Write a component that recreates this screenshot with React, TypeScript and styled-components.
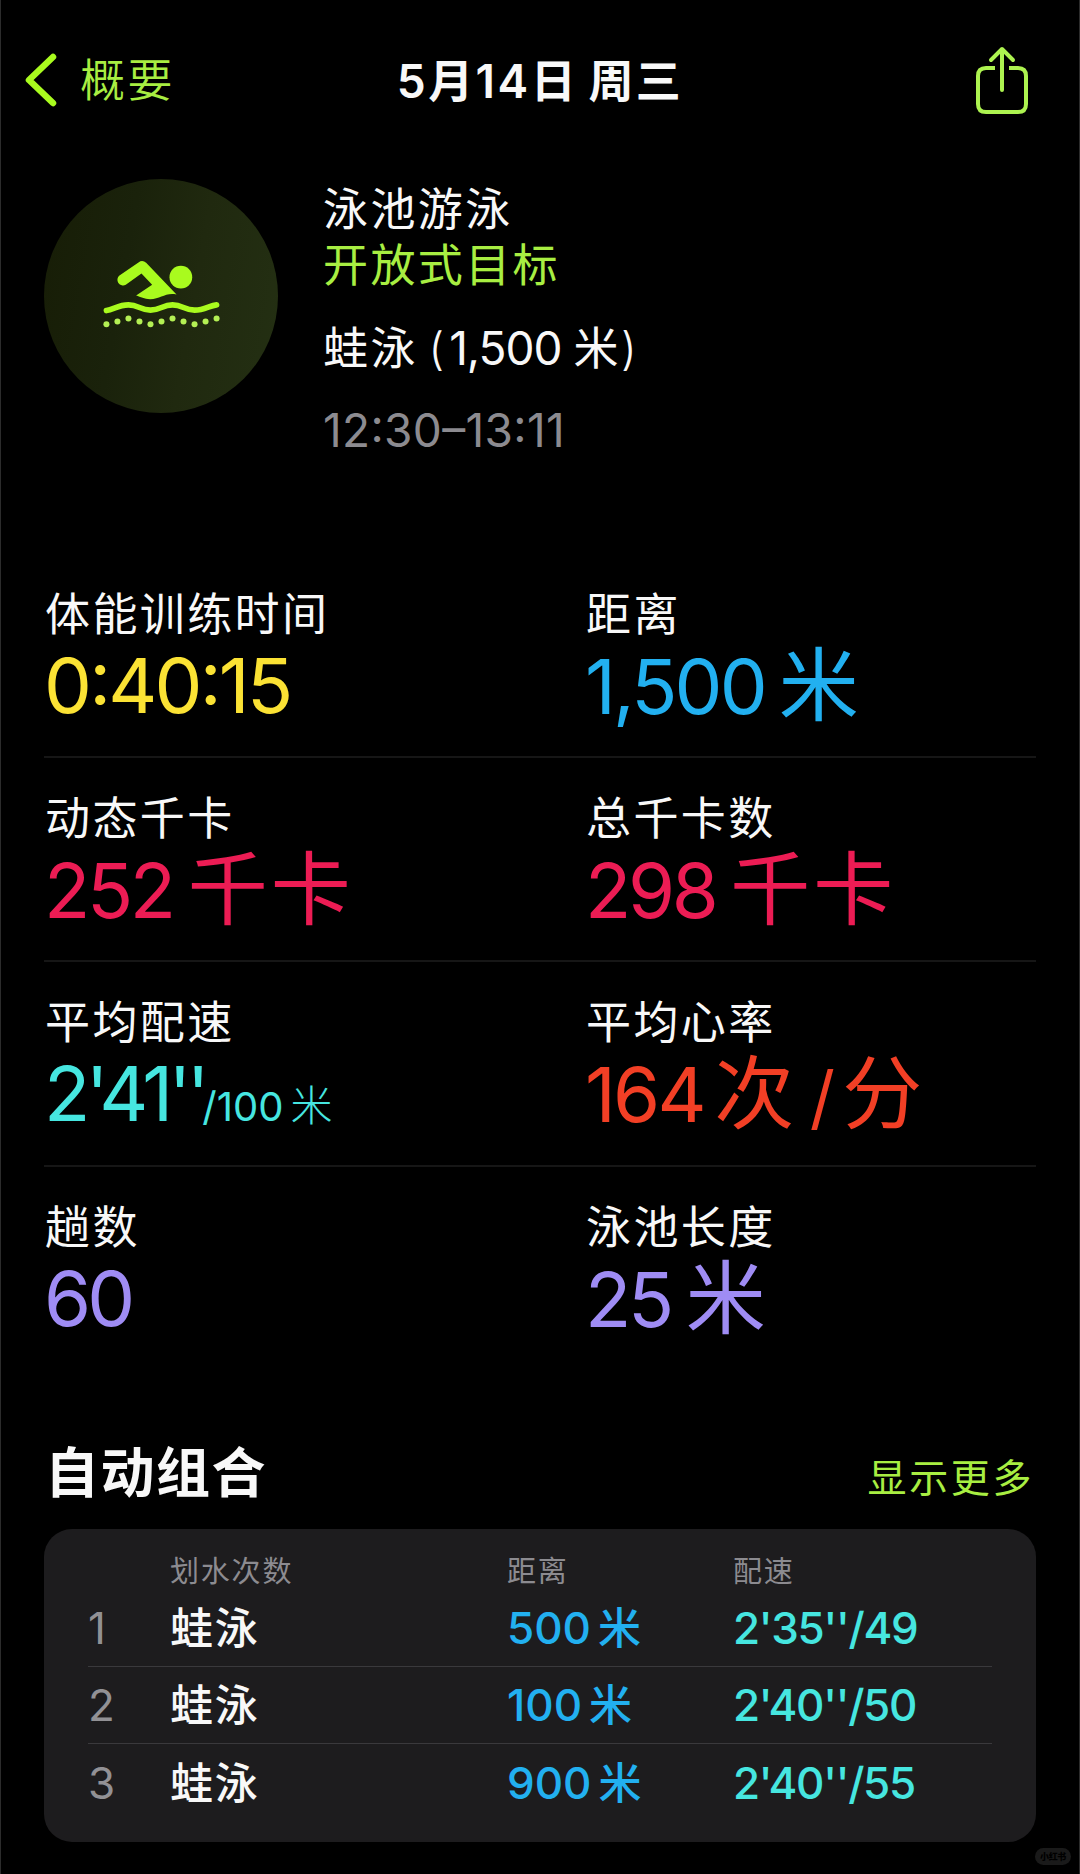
import React from "react";
import styled, { createGlobalStyle } from "styled-components";

const c = {
  lime: "#a9fb1e",
  limeText: "#a8ee42",
  white: "#f8f8f8",
  grey: "#8c8b90",
  yellow: "#fbe234",
  blue: "#22b0f0",
  pink: "#ec1c54",
  cyan: "#46e6e0",
  red: "#f23f25",
  violet: "#9f8cf4",
  card: "#1d1c1e",
};

const Global = createGlobalStyle`
  * { box-sizing: border-box; }
  body { margin: 0; background: #000; font-family: Inter, "Noto Sans CJK SC", sans-serif; }
`;

const Screen = styled.main`
  width: 1080px;
  height: 1874px;
  position: relative;
  overflow: hidden;
  background: #000;
  color: ${c.white};
  border-left: 1px solid #2c2c2c;
  border-right: 1px solid #2c2c2c;
  display: flex;
  flex-direction: column;
`;

const Line = styled.div<{ $h: number; $size: number; $color?: string; $weight?: number; $gap?: number }>`
  height: ${(p) => p.$h}px;
  line-height: ${(p) => p.$h}px;
  font-size: ${(p) => p.$size}px;
  color: ${(p) => p.$color ?? "inherit"};
  font-weight: ${(p) => p.$weight ?? 400};
  letter-spacing: ${(p) => p.$gap ?? 2.4}px;
  white-space: pre;
`;

const Part = styled.span<{ $size?: number; $gap?: number; $left?: number; $weight?: number }>`
  font-size: ${(p) => (p.$size ? `${p.$size}px` : "inherit")};
  letter-spacing: ${(p) => (p.$gap === undefined ? "inherit" : `${p.$gap}px`)};
  margin-left: ${(p) => p.$left ?? 0}px;
  font-weight: ${(p) => p.$weight ?? "inherit"};
`;

const Clock = styled.span`
  font-feature-settings: "case" 1;
`;

const NavBar = styled.header`
  height: 162px;
  padding: 0 22px;
  display: grid;
  grid-template-columns: 1fr auto 1fr;
  align-items: center;
`;

const Back = styled.div`
  display: flex;
  align-items: center;
  gap: 21px;
`;

const Share = styled.svg`
  justify-self: end;
  margin: 0 27px 5px 0;
`;

const Summary = styled.section`
  padding: 17px 0 0 43px;
  height: 390px;
  display: flex;
  gap: 45px;
`;

const Badge = styled.div`
  width: 234px;
  height: 234px;
  border-radius: 50%;
  background: linear-gradient(100deg, #171d06 0%, #1a220b 35%, #20290f 62%, #243013 100%);
`;

const SummaryText = styled.div`
  display: flex;
  flex-direction: column;
`;

const Stats = styled.section`
  margin: 0 43px;
  display: flex;
  flex-direction: column;
`;

const StatRow = styled.div`
  height: 204.2px;
  padding-top: 41px;
  display: grid;
  grid-template-columns: 541px 1fr;
  & + & {
    border-top: 2px solid #161616;
    padding-top: 39px;
  }
`;

const StatLabel = styled(Line)`
  padding-left: 1px;
`;

const SectionHead = styled.div`
  display: flex;
  justify-content: space-between;
  align-items: center;
  height: 100px;
  margin-top: 55px;
  padding: 0 45px 0 44px;
`;

const More = styled.div`
  padding-top: 8px;
`;

const Card = styled.section`
  margin: 5px 43px 0;
  height: 313px;
  border-radius: 28px;
  background: ${c.card};
  padding: 19px 44px 0;
`;

const CardRow = styled.div<{ $head?: boolean }>`
  display: grid;
  grid-template-columns: 82px 337px 226px 1fr;
  align-items: center;
  height: ${(p) => (p.$head ? 42 : 77)}px;
  padding-top: ${(p) => (p.$head ? 6 : 1)}px;
  border-bottom: ${(p) => (p.$head ? "none" : "1px solid #3a393c")};
  &:last-child {
    border-bottom: none;
  }
`;

const Watermark = styled.div`
  position: absolute;
  right: 8px;
  bottom: 9px;
  width: 36px;
  height: 17px;
  border-radius: 9px;
  background: #1a1a1a;
  color: #000;
  font-size: 9px;
  font-weight: 900;
  line-height: 17px;
  text-align: center;
  letter-spacing: -0.4px;
`;

const dots = [493, 485, 476, 485, 493, 485, 476, 485, 493, 485, 476];

const Swimmer = () => (
  <svg width="234" height="234" viewBox="42 58 701 701" fill={c.lime}>
    <path d="M268 347 325 308Q337 299 348 309L439 404C405 397 392 418 360 418C342 418 332 411 318 407L366 375 334 341 287 375A17 17 0 0 1 268 347Z" />
    <circle cx="452" cy="352" r="34" />
    <path
      d="M229 452C250 449 265 435 295 435S331 451 361 451 397 435 427 435 463 451 493 451 538 437 559 435"
      fill="none"
      stroke={c.lime}
      strokeWidth="17"
      strokeLinecap="round"
    />
    {dots.map((y, i) => (
      <circle key={i} cx={229 + i * 33} cy={y} r="9" fill="#b4f054" />
    ))}
  </svg>
);

type StatProps = { label: string; color: string; gap?: number; children: React.ReactNode };

const StatCell = ({ label, color, gap = -3.4, children }: StatProps) => (
  <div>
    <StatLabel $h={44} $size={45}>{label}</StatLabel>
    <Line $h={96} $size={76} $color={color} $gap={gap}>{children}</Line>
  </div>
);

const Unit = ({ left = 15, children }: { left?: number; children: React.ReactNode }) => (
  <Part $size={80} $gap={3} $left={left}>{children}</Part>
);

const sets = [
  { n: "1", distance: "500", pace: "2'35''/49" },
  { n: "2", distance: "100", pace: "2'40''/50" },
  { n: "3", distance: "900", pace: "2'40''/55" },
];

export default function App() {
  return (
    <Screen>
      <Global />
      <NavBar>
        <Back>
          <svg width="36" height="60" viewBox="0 0 36 60" fill="none" stroke={c.lime} strokeWidth="6.5" strokeLinecap="round" strokeLinejoin="round">
            <path d="M30 6 6 29 30 52" />
          </svg>
          <Line $h={60} $size={45} $color={c.limeText} $weight={350}>概要</Line>
        </Back>
        <Line $h={60} $size={45} $weight={600}>
          <Part $size={46} $gap={2.5}>5</Part>月<Part $size={46} $gap={2.5}>14</Part>日<Part $gap={-1}> </Part>周三
        </Line>
        <Share width="56" height="72" viewBox="0 0 56 72" fill="none" stroke="#adf350" strokeWidth="4" strokeLinecap="round" strokeLinejoin="round">
          <path d="M21 25H12Q4 25 4 33V61Q4 69 12 69H44Q52 69 52 61V33Q52 25 44 25H35" strokeLinecap="butt" />
          <path d="M28 47V6M17 17 28 6 39 17" />
        </Share>
      </NavBar>

      <Summary>
        <Badge>
          <Swimmer />
        </Badge>
        <SummaryText>
          <Line $h={61} $size={45}>泳池游泳</Line>
          <Line $h={52} $size={45} $color={c.limeText}>开放式目标</Line>
          <Line $h={113} $size={45}>
            蛙泳<Part $left={-2} $gap={0} $weight={300}> (</Part>
            <Part $size={46} $gap={-1} $left={5}>1,500</Part>
            <Part $left={12}>米</Part>
            <Part $left={0} $weight={300}>)</Part>
          </Line>
          <Line $h={51} $size={46} $color={c.grey} $gap={0.35}>
            <Clock>12:30–13:11</Clock>
          </Line>
        </SummaryText>
      </Summary>

      <Stats>
        <StatRow>
          <StatCell label="体能训练时间" color={c.yellow} gap={-2.8}>
            <Clock>0:40:15</Clock>
          </StatCell>
          <StatCell label="距离" color={c.blue} gap={-2.8}>
            1,500<Unit left={14}>米</Unit>
          </StatCell>
        </StatRow>
        <StatRow>
          <StatCell label="动态千卡" color={c.pink}>
            252<Unit>千卡</Unit>
          </StatCell>
          <StatCell label="总千卡数" color={c.pink}>
            298<Unit>千卡</Unit>
          </StatCell>
        </StatRow>
        <StatRow>
          <StatCell label="平均配速" color={c.cyan} gap={-4.6}>
            2'41''<Part $size={40} $gap={0} $left={-2.6}>/100</Part>
            <Part $size={42} $left={7} $weight={300}>米</Part>
          </StatCell>
          <StatCell label="平均心率" color={c.red} gap={-2.8}>
            164<Unit left={10.6}>次</Unit>
            <Part $size={70} $left={12.5}>/</Part>
            <Part $size={80} $left={10}>分</Part>
          </StatCell>
        </StatRow>
        <StatRow>
          <StatCell label="趟数" color={c.violet} gap={-4}>60</StatCell>
          <StatCell label="泳池长度" color={c.violet}>
            25<Unit>米</Unit>
          </StatCell>
        </StatRow>
      </Stats>

      <SectionHead>
        <Line $h={80} $size={54} $weight={700} $gap={1.5}>自动组合</Line>
        <More>
          <Line $h={60} $size={39} $color={c.limeText} $gap={2.6}>显示更多</Line>
        </More>
      </SectionHead>

      <Card>
        <CardRow $head>
          <span />
          {["划水次数", "距离", "配速"].map((t) => (
            <Line key={t} $h={36} $size={29} $color={c.grey} $gap={1.8}>{t}</Line>
          ))}
        </CardRow>
        {sets.map((s) => (
          <CardRow key={s.n}>
            <Line $h={70} $size={44} $color="#929195" $gap={0}>{s.n}</Line>
            <Line $h={70} $size={43} $weight={500} $gap={1.7}>蛙泳</Line>
            <Line $h={70} $size={44} $weight={500} $color={c.blue} $gap={0}>
              {s.distance}<Part $size={43} $left={7}>米</Part>
            </Line>
            <Line $h={70} $size={44} $weight={500} $color={c.cyan} $gap={-1.3}>{s.pace}</Line>
          </CardRow>
        ))}
      </Card>
      <Watermark>小红书</Watermark>
    </Screen>
  );
}
